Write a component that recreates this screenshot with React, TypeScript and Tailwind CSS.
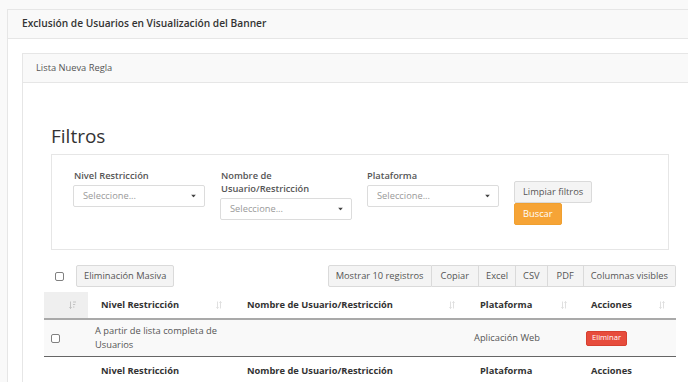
import React from "react";

const SortBoth = () => (
  <svg width="6" height="8" viewBox="0 0 6 8" className="absolute right-[11px] top-1/2 -translate-y-1/2">
    <path d="M1.5 0.5V7.5M0.3 6.3L1.5 7.5L2.7 6.3M4.5 7.5V0.5M3.3 1.7L4.5 0.5L5.7 1.7" stroke="#dcdcdc" strokeWidth="0.9" fill="none" />
  </svg>
);

const SortAsc = () => (
  <svg width="7" height="8" viewBox="0 0 7 8" className="absolute right-[12px] top-1/2 -translate-y-1/2">
    <path d="M1.5 0.5V7.5M0.3 6.3L1.5 7.5L2.7 6.3" stroke="#bdbdbd" strokeWidth="0.9" fill="none" />
    <path d="M4 1H7M4 3.5H6.2M4 6H5.4" stroke="#bdbdbd" strokeWidth="0.9" fill="none" />
  </svg>
);

const Caret = () => (
  <svg width="5" height="3" viewBox="0 0 5 3" className="absolute right-[8px] top-1/2 -translate-y-1/2">
    <path d="M0 0H5L2.5 3Z" fill="#444" />
  </svg>
);

const Select = ({ className = "" }: { className?: string }) => (
  <div className={"relative h-[22px] w-[132px] rounded-[2px] border border-[#dcdcdc] bg-white pl-[9px] flex items-center text-[9.3px] text-[#999] " + className}>
    Seleccione...
    <Caret />
  </div>
);

const Btn = ({ children, className = "" }: { children: React.ReactNode; className?: string }) => (
  <div className={"h-[22px] flex items-center bg-[#f4f4f4] border border-[#dadada] text-[9.3px] text-[#555] " + className}>
    {children}
  </div>
);

const Check = () => <div className="w-[9px] h-[9px] rounded-[2px] border border-[#808080] bg-white" />;

export default function App() {
  return (
    <div className="w-[688px] h-[382px] overflow-hidden bg-[#f9f9f9] font-['Open_Sans',sans-serif] text-[#555]">
      <div className="ml-[7px] mt-[9px] w-[760px] h-[400px] border border-[#e6e6e6] bg-white">
        <div className="h-[29px] bg-[#f9f9f9] border-b border-[#e6e6e6] pl-[14px] flex items-center text-[10.2px] font-semibold text-[#333]">
          Exclusión de Usuarios en Visualización del Banner
        </div>
        <div className="pt-[14px] pl-[14px]">
          <div className="border border-[#e6e6e6] h-[400px]">
            <div className="h-[29px] bg-[#f9f9f9] border-b border-[#e6e6e6] pl-[13px] flex items-center text-[9.3px] text-[#555]">
              Lista Nueva Regla
            </div>
            <div className="pt-[39px]">
              <div className="pl-[28px] h-[28px] text-[19px] leading-[28px] text-[#333] font-normal">Filtros</div>
              <div className="mt-[4px] ml-[28px] w-[618px] h-[96px] border border-[#e6e6e6] pt-[14px] pl-[21px] flex items-start">
                <div className="w-[147px]">
                  <div className="text-[9.3px] leading-[13px] font-semibold text-[#555] h-[13px] pl-[1px]">Nivel Restricción</div>
                  <Select className="mt-[3px]" />
                </div>
                <div className="w-[147px]">
                  <div className="text-[9.3px] leading-[13px] font-semibold text-[#555] pl-[1px]">
                    Nombre de
                    <br />
                    Usuario/Restricción
                  </div>
                  <Select className="mt-[3px]" />
                </div>
                <div className="w-[147px]">
                  <div className="text-[9.3px] leading-[13px] font-semibold text-[#555] h-[13px]">Plataforma</div>
                  <Select className="mt-[3px] w-[131px]" />
                </div>
                <div className="mt-[12px] flex flex-col items-start">
                  <Btn className="rounded-[2px] px-[8px]">Limpiar filtros</Btn>
                  <div className="h-[22px] flex items-center px-[8px] bg-[#f6a436] border border-[#f0a030] rounded-[2px] text-[9.3px] text-white">
                    Buscar
                  </div>
                </div>
              </div>

              <div className="ml-[21px] w-[632px] mt-[15px]">
                <div className="flex items-center h-[22px]">
                  <div className="ml-[11px]">
                    <Check />
                  </div>
                  <Btn className="ml-[12px] rounded-[2px] px-[7px]">Eliminación Masiva</Btn>
                  <div className="ml-auto flex">
                    <Btn className="rounded-l-[2px] px-[7px]">Mostrar 10 registros</Btn>
                    <Btn className="border-l-0 px-[9px]">Copiar</Btn>
                    <Btn className="border-l-0 px-[7px]">Excel</Btn>
                    <Btn className="border-l-0 px-[7px]">CSV</Btn>
                    <Btn className="border-l-0 px-[9px]">PDF</Btn>
                    <Btn className="border-l-0 rounded-r-[2px] px-[7px]">Columnas visibles</Btn>
                  </div>
                </div>

                <div className="mt-[5px] grid grid-cols-[44px_145px_233px_112px_98px] text-[9.3px]">
                  <div className="relative h-[28px] bg-[#efefef] border-b-2 border-[#a9a9a9]">
                    <SortAsc />
                  </div>
                  <div className="relative h-[28px] border-b-2 border-[#a9a9a9] pl-[13px] flex items-center font-bold text-[#333]">
                    Nivel Restricción
                    <SortBoth />
                  </div>
                  <div className="relative h-[28px] border-b-2 border-[#a9a9a9] pl-[14px] flex items-center font-bold text-[#333]">
                    Nombre de Usuario/Restricción
                    <SortBoth />
                  </div>
                  <div className="relative h-[28px] border-b-2 border-[#a9a9a9] pl-[14px] flex items-center font-bold text-[#333]">
                    Plataforma
                    <SortBoth />
                  </div>
                  <div className="relative h-[28px] border-b-2 border-[#a9a9a9] pl-[13px] flex items-center font-bold text-[#333]">
                    Acciones
                    <SortBoth />
                  </div>

                  <div className="h-[37px] bg-[#f9f9f9] border-b border-[#666] flex items-center pl-[7px]">
                    <Check />
                  </div>
                  <div className="h-[37px] bg-[#f9f9f9] border-b border-[#666] flex items-center pl-[7px] pr-[8px] leading-[14px] text-[#555]">
                    A partir de lista completa de Usuarios
                  </div>
                  <div className="h-[37px] bg-[#f9f9f9] border-b border-[#666]" />
                  <div className="h-[37px] bg-[#f9f9f9] border-b border-[#666] flex items-center pl-[8px] text-[#555]">
                    Aplicación Web
                  </div>
                  <div className="h-[37px] bg-[#f9f9f9] border-b border-[#666] flex items-center pl-[8px]">
                    <div className="h-[15px] px-[5px] flex items-center bg-[#e74c3c] border border-[#d64030] rounded-[2px] text-[7.6px] text-white">
                      Eliminar
                    </div>
                  </div>

                  <div className="h-[28px]" />
                  <div className="h-[28px] pl-[13px] flex items-center font-bold text-[#333]">Nivel Restricción</div>
                  <div className="h-[28px] pl-[14px] flex items-center font-bold text-[#333]">Nombre de Usuario/Restricción</div>
                  <div className="h-[28px] pl-[14px] flex items-center font-bold text-[#333]">Plataforma</div>
                  <div className="h-[28px] pl-[13px] flex items-center font-bold text-[#333]">Acciones</div>
                </div>
              </div>
            </div>
          </div>
        </div>
      </div>
    </div>
  );
}
